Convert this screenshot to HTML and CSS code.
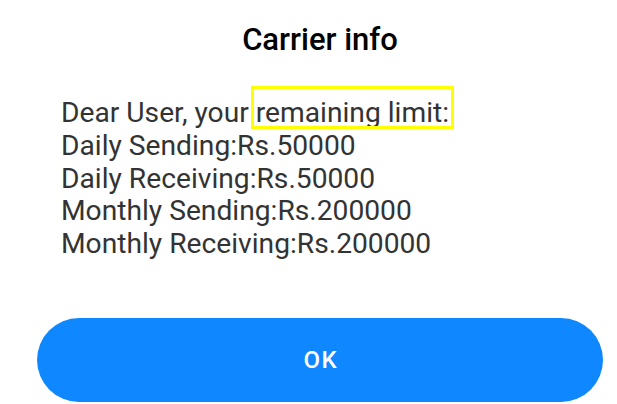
FILE: index.html
```html
<!DOCTYPE html>
<html>
<head>
<meta charset="utf-8">
<link rel="stylesheet" href="styles.css">
</head>
<body>
<div class="dialog">
  <h1 class="title">Carrier info</h1>
  <div class="message">
    <div class="line">Dear User, your <span class="mark">remaining limit:</span></div>
    <div class="line">Daily Sending:Rs.50000</div>
    <div class="line">Daily Receiving:Rs.50000</div>
    <div class="line">Monthly Sending:Rs.200000</div>
    <div class="line">Monthly Receiving:Rs.200000</div>
  </div>
  <div class="actions">
    <button class="ok">OK</button>
  </div>
</div>
</body>
</html>
```
FILE: styles.css
```css
html, body {
  margin: 0;
  padding: 0;
  background: #ffffff;
}
body {
  font-family: Roboto, "Noto Sans", sans-serif;
}
.dialog {
  width: 617px;
  height: 404px;
  box-sizing: border-box;
  padding: 22px 14px 0 37px;
  display: flex;
  flex-direction: column;
}
.title {
  margin: 0;
  font-size: 31px;
  line-height: 36px;
  font-weight: 500;
  color: #000000;
  text-align: center;
}
.message {
  margin-top: 39px;
  padding-left: 24px;
  font-size: 28.2px;
  line-height: 32.75px;
  color: #333333;
  font-weight: 400;
}
.mark {
  position: relative;
}
.mark::after {
  content: "";
  position: absolute;
  top: -10px;
  bottom: 0;
  left: -5px;
  right: -5px;
  border: 3px solid #ffff00;
}
.actions {
  margin-top: 57px;
}
.ok {
  display: block;
  width: 566px;
  height: 84px;
  border: none;
  border-radius: 42px;
  background: #0f88ff;
  color: #ffffff;
  font-family: Roboto, "Noto Sans", sans-serif;
  font-size: 24px;
  font-weight: 500;
  letter-spacing: 1.5px;
  padding: 0 0 0 1.5px;
}
```
